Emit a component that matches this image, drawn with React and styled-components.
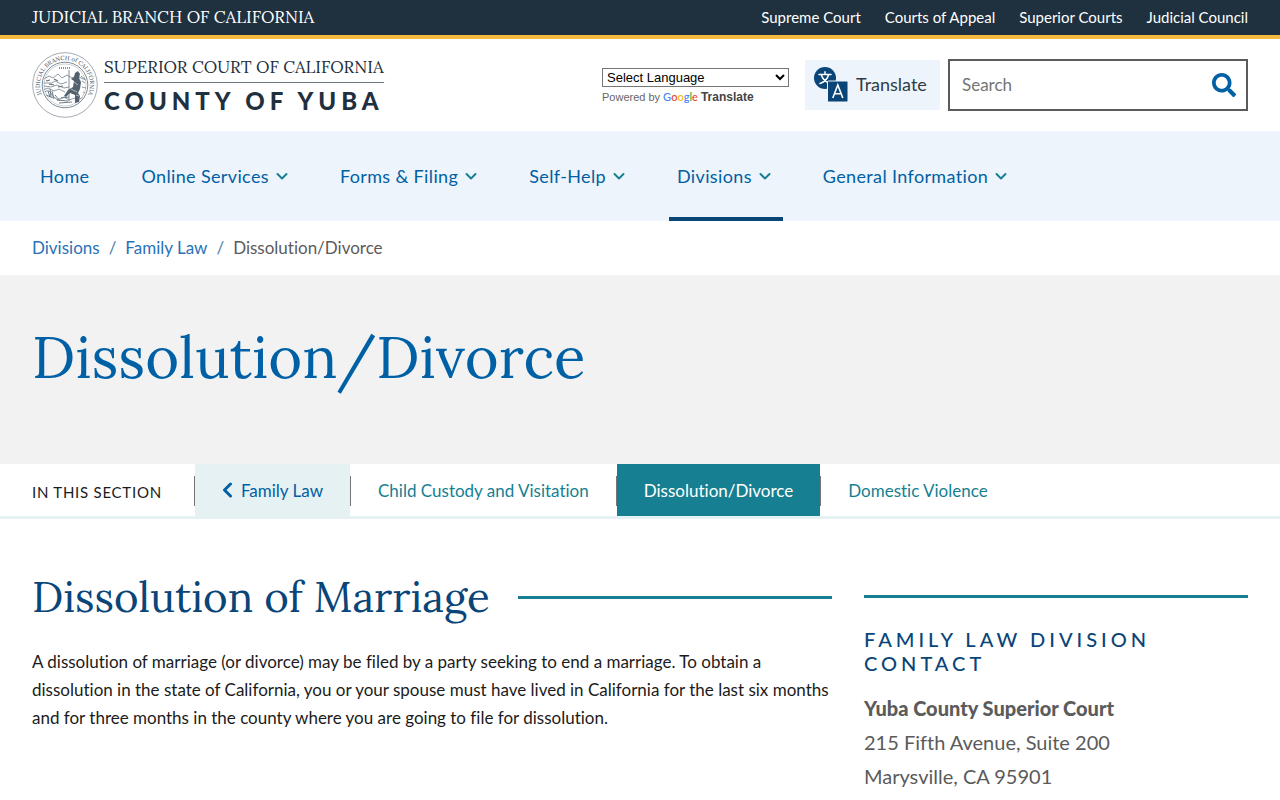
import React from "react";
import styled, { createGlobalStyle } from "styled-components";
import { FaSearch } from "react-icons/fa";

const divisionLinks = ["Supreme Court", "Courts of Appeal", "Superior Courts", "Judicial Council"];

const navItems = [
  { label: "Home" },
  { label: "Online Services", menu: true },
  { label: "Forms & Filing", menu: true },
  { label: "Self-Help", menu: true },
  { label: "Divisions", menu: true, active: true },
  { label: "General Information", menu: true },
];

const sectionLinks = [
  { label: "Family Law", kind: "back" },
  { label: "Child Custody and Visitation" },
  { label: "Dissolution/Divorce", kind: "active" },
  { label: "Domestic Violence" },
];

const Seal = () => (
  <svg width="66" height="66" viewBox="0 0 66 66" fill="none" aria-hidden="true">
    <defs>
      <path id="seal-arc" d="M12.6 47.5A25 25 0 1 1 53.4 47.5" />
      <clipPath id="seal-clip">
        <circle cx="33" cy="33" r="21.5" />
      </clipPath>
    </defs>
    <circle cx="33" cy="33" r="32.3" stroke="#8b949d" strokeWidth="0.8" />
    <circle cx="33" cy="33" r="22.8" stroke="#5c6b78" strokeWidth="0.8" />
    <circle cx="33" cy="33" r="21" stroke="#98a2ab" strokeWidth="0.5" />
    <text fontFamily="Lora, Liberation Serif, serif" fontSize="6" fill="#3f4d59">
      <textPath href="#seal-arc" startOffset="50%" textAnchor="middle">JUDICIAL BRANCH of CALIFORNIA</textPath>
    </text>
    <g clipPath="url(#seal-clip)" stroke="#5f6f7c" strokeWidth="0.7">
      <path d="M27 16h12" strokeDasharray="1 1" strokeWidth="1.4" />
      <path d="M12 27l5-3 4 2 5-4 4 4 5-3 5 3 4-2 10 4" />
      <path d="M11 31h9l3-2 6 3 6-2M12 34l7 1 6-2 7 3 5-1M11 38l5-2 6 3 5-2 6 3" />
      <path d="M14 29l4-1M22 27l4 2M17 32l5 1M26 35l5-1" strokeWidth="1.1" />
      <path d="M13 40c3-3 6 0 7 3s4 2 5 5l7-3 5 3 9-3" />
      <path d="M16 39l2 6M18 37l1 8M20 39l2 8M14 43l7 3M23 43l5 6M25 48l11 1M27 51l13-1M29 46l8-1" strokeWidth="0.9" />
      <path d="M37 18v31" strokeWidth="0.8" />
      <path d="M49 24l4 3M50 29l3 2M50 35l4 1M51 40l3 2M48 47l5-3" />
    </g>
    <path d="M43 21l3-2 2 3-1 4 2 4-1 7-2 4 2 3-1 6-4 1v-8l-5-2-4 4-2-1 4-6 5-3 1-6-3-2 3-2z" fill="#53616e" />
    <path d="M42 30l4 3M39 37l6 3M44 43l3 1" stroke="#d4d9de" strokeWidth="0.7" />
  </svg>
);

const Chevron = () => (
  <svg width="12" height="8" viewBox="0 0 12 8" fill="none" stroke="#167f92" strokeWidth="2" strokeLinecap="round" strokeLinejoin="round" aria-hidden="true">
    <path d="M1.5 2L6 6.500l4.500-4.500" />
  </svg>
);

const BackArrow = () => (
  <svg width="11" height="16" viewBox="0 0 11 16" fill="none" stroke="#0060a5" strokeWidth="3" strokeLinecap="round" strokeLinejoin="round" aria-hidden="true">
    <path d="M8.500 2L2.500 8l6 6" />
  </svg>
);

const TranslateIcon = () => (
  <svg width="34" height="35" viewBox="0 0 34 35" fill="none" aria-hidden="true">
    <circle cx="11" cy="11" r="11" fill="#0a4578" />
    <path d="M5 7.500h12M11 4.800v2.700M7.300 7.500c1 4 3.800 7 7.700 8.700M14.700 7.500c-1 4-4 7.300-8.700 9" stroke="#fff" strokeWidth="1.500" strokeLinecap="round" />
    <rect x="13.500" y="14" width="20.500" height="21" rx="1" fill="#0a4578" stroke="#edf4fb" />
    <path d="M18.800 31l5-13 5 13M20.600 26.800h6.400" stroke="#fff" strokeWidth="1.600" />
  </svg>
);

const App = () => {
  return (
    <>
      <GlobalStyle />

      <TopBar>
        <BranchLink href="#">JUDICIAL BRANCH OF CALIFORNIA</BranchLink>
        <TopLinks aria-label="Judicial branch">
          {divisionLinks.map((label) => (
            <TopLink href="#" key={label}>{label}</TopLink>
          ))}
        </TopLinks>
      </TopBar>

      <Header>
        <Brand href="#">
          <Seal />
          <BrandText>
            <BrandCourt>SUPERIOR COURT OF CALIFORNIA</BrandCourt>
            <BrandCounty>COUNTY OF YUBA</BrandCounty>
          </BrandText>
        </Brand>

        <Tools>
          <LanguageBox>
            <LanguageSelect aria-label="Select Language">
              <option>Select Language</option>
            </LanguageSelect>
            <PoweredBy>
              Powered by
              <GoogleMark>
                <Letter $color="#4285f4">G</Letter>
                <Letter $color="#ea4335">o</Letter>
                <Letter $color="#fbbc05">o</Letter>
                <Letter $color="#4285f4">g</Letter>
                <Letter $color="#34a853">l</Letter>
                <Letter $color="#ea4335">e</Letter>
              </GoogleMark>
              <strong>Translate</strong>
            </PoweredBy>
          </LanguageBox>

          <TranslateButton type="button">
            <TranslateIcon />
            Translate
          </TranslateButton>

          <SearchForm role="search">
            <SearchInput type="text" placeholder="Search" aria-label="Search" />
            <SearchButton type="button" aria-label="Submit search">
              <FaSearch size={24} />
            </SearchButton>
          </SearchForm>
        </Tools>
      </Header>

      <MainNav aria-label="Main">
        {navItems.map((item) => (
          <NavLink href="#" key={item.label} $active={item.active}>
            {item.label}
            {item.menu && <Chevron />}
          </NavLink>
        ))}
      </MainNav>

      <Breadcrumb aria-label="Breadcrumb">
        <CrumbLink href="#">Divisions</CrumbLink>
        <Slash>/</Slash>
        <CrumbLink href="#">Family Law</CrumbLink>
        <Slash>/</Slash>
        <span>Dissolution/Divorce</span>
      </Breadcrumb>

      <Hero>
        <PageTitle>Dissolution/Divorce</PageTitle>
      </Hero>

      <SectionNav aria-label="In this section">
        <SectionLabel>IN THIS SECTION</SectionLabel>
        {sectionLinks.map((link) => (
          <React.Fragment key={link.label}>
            <Divider />
            <SectionLink href="#" $kind={link.kind}>
              {link.kind === "back" && <BackArrow />}
              {link.label}
            </SectionLink>
          </React.Fragment>
        ))}
      </SectionNav>

      <Content>
        <Article>
          <SectionHeading>Dissolution of Marriage</SectionHeading>
          <Paragraph>
            A dissolution of marriage (or divorce) may be filed by a party seeking to end a marriage. To obtain a
            dissolution in the state of California, you or your spouse must have lived in California for the last six
            months and for three months in the county where you are going to file for dissolution.
          </Paragraph>
        </Article>

        <Sidebar>
          <SidebarTitle>FAMILY LAW DIVISION CONTACT</SidebarTitle>
          <Address>
            <strong>Yuba County Superior Court</strong>
            <span>215 Fifth Avenue, Suite 200</span>
            <span>Marysville, CA 95901</span>
          </Address>
        </Sidebar>
      </Content>
    </>
  );
};

const serif = `Lora, "Liberation Serif", serif`;

const GlobalStyle = createGlobalStyle`
  * {
    box-sizing: border-box;
  }

  body {
    margin: 0;
    background: #ffffff;
    color: #1b1b1b;
    font-family: Lato, sans-serif;
    font-size: 17px;
    font-variant-ligatures: none;
  }

  a {
    text-decoration: none;
  }
`;

const TopBar = styled.div`
  display: flex;
  align-items: center;
  justify-content: space-between;
  height: 39px;
  padding: 0 32px 2px;
  background: #1f303e;
  border-bottom: 4px solid #f5b93f;
`;

const BranchLink = styled.a`
  color: #ffffff;
  font-family: ${serif};
  font-size: 17px;
`;

const TopLinks = styled.nav`
  display: flex;
  gap: 24px;
`;

const TopLink = styled.a`
  color: #ffffff;
  font-size: 15px;
`;

const Header = styled.header`
  display: flex;
  align-items: center;
  justify-content: space-between;
  height: 92px;
  padding: 0 32px;
`;

const Brand = styled.a`
  display: flex;
  align-items: center;
  gap: 6px;
  color: #1f303e;
`;

const BrandText = styled.span`
  display: flex;
  flex-direction: column;
`;

const BrandCourt = styled.span`
  padding-bottom: 4px;
  border-bottom: 1px solid #6b7780;
  font-family: ${serif};
  font-size: 17px;
  line-height: 22px;
`;

const BrandCounty = styled.span`
  padding-top: 4px;
  font-size: 24px;
  font-weight: 900;
  line-height: 28px;
  letter-spacing: 5px;
`;

const Tools = styled.div`
  display: flex;
  align-items: center;
`;

const LanguageBox = styled.div`
  width: 187px;
  margin-right: 16px;
  padding-top: 4px;
  font-family: "Liberation Sans", sans-serif;
`;

const LanguageSelect = styled.select`
  display: block;
  width: 100%;
  height: 19px;
  border: 1px solid #767676;
  border-radius: 0;
  background: #ffffff;
  color: #000000;
  font-family: inherit;
  font-size: 13px;
`;

const PoweredBy = styled.div`
  display: flex;
  align-items: center;
  gap: 3px;
  height: 20px;
  color: #666666;
  font-size: 11px;

  strong {
    color: #444444;
    font-size: 12px;
  }
`;

const GoogleMark = styled.span`
  display: flex;
  font-family: Lato, sans-serif;
  font-size: 11px;
  font-weight: 500;
`;

const Letter = styled.span`
  color: ${(props) => props.$color};
`;

const TranslateButton = styled.button`
  display: flex;
  align-items: center;
  gap: 8px;
  width: 135px;
  height: 50px;
  margin-right: 8px;
  padding: 0 9px 2px;
  border: 0;
  background: #edf4fb;
  color: #2f3c48;
  font-family: inherit;
  font-size: 18px;
`;

const SearchForm = styled.form`
  display: flex;
  align-items: center;
  width: 300px;
  height: 52px;
  border: 2px solid #5b5b5b;
`;

const SearchInput = styled.input`
  flex: 1;
  min-width: 0;
  padding: 0 12px 2px;
  border: 0;
  outline: 0;
  font-family: inherit;
  font-size: 17px;

  &::placeholder {
    color: #757575;
  }
`;

const SearchButton = styled.button`
  display: flex;
  padding: 0 10px;
  border: 0;
  background: none;
  color: #0060a5;
`;

const MainNav = styled.nav`
  display: flex;
  gap: 32px;
  height: 90px;
  padding: 0 32px;
  background: #edf4fb;
`;

const NavLink = styled.a`
  display: flex;
  align-items: center;
  gap: 7px;
  padding: 4px 12px 0 8px;
  border-bottom: 4px solid ${(props) => (props.$active ? "#0a4578" : "transparent")};
  color: #0060a5;
  font-size: 18px;
  letter-spacing: 0.02em;
`;

const Breadcrumb = styled.nav`
  display: flex;
  align-items: center;
  gap: 9px;
  height: 54px;
  padding: 0 32px 2px;
  color: #5b5b5b;
`;

const CrumbLink = styled.a`
  color: #2a71b8;
`;

const Slash = styled.span`
  color: #4b7fa8;
`;

const Hero = styled.div`
  padding: 42px 32px 67px;
  background: #f2f2f2;
`;

const PageTitle = styled.h1`
  margin: 0;
  color: #0060a5;
  font-family: ${serif};
  font-size: 58px;
  font-weight: 400;
  line-height: 80px;
`;

const SectionNav = styled.nav`
  display: flex;
  height: 55px;
  padding: 0 32px;
  border-bottom: 3px solid #e5f1f3;
`;

const SectionLabel = styled.span`
  padding: 3px 32px 0 0;
  font-size: 15px;
  line-height: 50px;
  letter-spacing: 0.05em;
`;

const Divider = styled.span`
  width: 1px;
  height: 30px;
  margin-top: 12px;
  background: #757575;
`;

const linkKinds = {
  back: { background: "#e5f1f3", color: "#0060a5" },
  active: { background: "#167f92", color: "#ffffff" },
};

const SectionLink = styled.a`
  display: flex;
  align-items: center;
  gap: 8px;
  padding: 0 27px;
  background: ${(props) => linkKinds[props.$kind]?.background || "transparent"};
  color: ${(props) => linkKinds[props.$kind]?.color || "#167f92"};
`;

const Content = styled.main`
  display: grid;
  grid-template-columns: minmax(0, 25fr) minmax(0, 12fr);
  gap: 32px;
  padding: 48px 32px 0;
`;

const Article = styled.article`
  display: flex;
  flex-direction: column;
  gap: 21px;
`;

const SectionHeading = styled.h2`
  display: flex;
  align-items: center;
  gap: 28px;
  margin: 0;
  color: #0a4578;
  font-family: ${serif};
  font-size: 42px;
  font-weight: 400;
  line-height: 60px;

  &::after {
    content: "";
    flex: 1;
    height: 3px;
    background: #167f92;
  }
`;

const Paragraph = styled.p`
  margin: 0;
  line-height: 28px;
`;

const Sidebar = styled.aside`
  margin-top: 28px;
  padding-top: 29px;
  border-top: 3px solid #167f92;
`;

const SidebarTitle = styled.h3`
  margin: 0;
  color: #0a4578;
  font-size: 20px;
  font-weight: 500;
  line-height: 24px;
  letter-spacing: 0.2em;
`;

const Address = styled.address`
  display: flex;
  flex-direction: column;
  margin-top: 16px;
  color: #5b5b5b;
  font-size: 20px;
  font-style: normal;
  line-height: 34px;

  strong {
    font-weight: 900;
  }
`;

export default App;
